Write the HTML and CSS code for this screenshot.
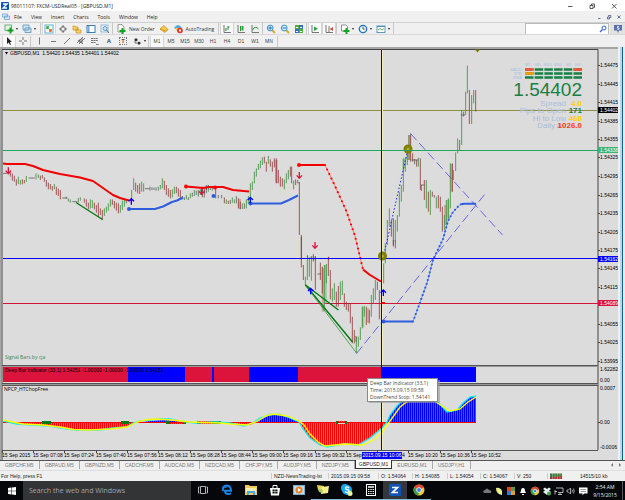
FILE: index.html
```html
<!DOCTYPE html>
<html lang="en">
<head>
<meta charset="utf-8">
<title>98011107: FXCM-USDReal05 - [GBPUSD,M1]</title>
<link rel="stylesheet" href="styles.css">
</head>
<body>
<header class="titlebar">
  <svg class="app-icon" viewBox="0 0 8 8"><rect width="8" height="8" rx="1" fill="#0b55b8"/><path d="M2 2H6L2 6H6" fill="none" stroke="#fff" stroke-width="1.3"/></svg>
  <span class="title">98011107: FXCM-USDReal05 - [GBPUSD,M1]</span>
  <button class="win" aria-label="Minimize"><svg viewBox="0 0 8 8"><path d="M2 4.5H6.500"/></svg></button>
  <button class="win" aria-label="Restore"><svg viewBox="0 0 8 8"><path d="M2 3.500H5V6.500H2ZM3.500 3V2H6.500V5.500H5.500"/></svg></button>
  <button class="win" aria-label="Close"><svg viewBox="0 0 8 8"><path d="M2 2L6.500 6.500M6.500 2L2 6.500"/></svg></button>
</header>

<nav class="menubar">
  <svg class="menu-icon" viewBox="0 0 8 8"><path d="M.5 1H5.500V4H.5ZM2.500 3H7.500V6.500H2.500Z" fill="#d7ebfa" stroke="#5b9bd0" stroke-width=".7"/></svg>
  <button>File</button><button>View</button><button>Insert</button><button>Charts</button><button>Tools</button><button>Window</button><button>Help</button>
  <span class="grow"></span>
  <button class="mdi" aria-label="Minimize chart"><svg viewBox="0 0 6 6"><path d="M2 4.500H4.500"/></svg></button>
  <button class="mdi" aria-label="Restore chart"><svg viewBox="0 0 6 6"><path d="M1.500 3H3.500V5H1.500ZM2.500 2.500V1.500H4.800V3.500H4"/></svg></button>
  <button class="mdi" aria-label="Close chart"><svg viewBox="0 0 6 6"><path d="M1.500 1.500L4.500 4.500M4.500 1.500L1.500 4.500"/></svg></button>
</nav>

<div class="toolbar main-tools">
  <button class="split" aria-label="New chart"><svg viewBox="0 0 10 10"><rect x="1" y="1" width="6.500" height="5.500" fill="#e5f5e5" stroke="#4e9d62" stroke-width=".8"/><path d="M6.500 3.500V9.500M3.500 6.500H9.500" stroke="#15a020" stroke-width="2"/></svg></button>
  <button class="split" aria-label="Profiles"><svg viewBox="0 0 10 10"><path d="M1 1H7V6H1ZM3 4H9V8.500H3Z" fill="#cfe6f6" stroke="#5a91bb" stroke-width=".8"/></svg></button>
  <i class="sep wide"></i>
  <button class="tool pressed" aria-label="Market Watch"><svg viewBox="0 0 10 10"><rect x="1" y="1" width="8" height="8" fill="#fff" stroke="#5eaed2"/><path d="M3 5V3H5" stroke="#21a53a" stroke-width="1.500" fill="none"/><path d="M3 3L7 7" stroke="#21a53a" stroke-width=".8"/><path d="M5 7H7V5" stroke="#e55025" stroke-width="1.500" fill="none"/></svg></button>
  <button class="tool" aria-label="Data Window"><svg viewBox="0 0 10 10"><circle cx="5" cy="5" r="2.500" fill="none" stroke="#666" stroke-width=".8"/><path d="M5 1V4M5 6V9M1 5H4M6 5H9" stroke="#666" stroke-width=".9"/></svg></button>
  <button class="tool" aria-label="Navigator"><svg viewBox="0 0 10 10"><path d="M1 2H3L4 3H6V6H1ZM4 5H6L7 6H9V9H4Z" fill="#f7d35a" stroke="#c39424" stroke-width=".7"/></svg></button>
  <button class="tool" aria-label="Terminal"><svg viewBox="0 0 10 10"><rect x="1" y="1.500" width="8" height="7" fill="#fff" stroke="#397fb5"/><path d="M2.500 2V8" stroke="#67aee0" stroke-width="2"/></svg></button>
  <button class="tool" aria-label="Strategy Tester"><svg viewBox="0 0 10 10"><rect x="1" y="1" width="7" height="7" fill="#eef6fb" stroke="#79aed2" stroke-width=".8"/><circle cx="5" cy="4.500" r="2" fill="#c7e5f7" stroke="#4d88b3" stroke-width=".8"/><path d="M6.500 6L9 9" stroke="#5c6c76"/></svg></button>
  <i class="sep thin"></i>
  <button class="label-tool"><svg viewBox="0 0 10 10"><path d="M2 .5H6L8 3V8H2Z" fill="#fff" stroke="#777" stroke-width=".7"/><path d="M6.500 4V10M3.500 7H9.500" stroke="#13a51e" stroke-width="2"/></svg>New Order</button>
  <button class="tool" aria-label="MetaEditor"><svg viewBox="0 0 10 10"><path d="M1 5L5 1.500L9 5.500L6 8.500Z" fill="#f7c845" stroke="#c08a18" stroke-width=".7"/><path d="M1 5L6 7L9 5.500" stroke="#c08a18" stroke-width=".6" fill="none"/></svg></button>
  <button class="label-tool"><svg viewBox="0 0 10 10"><path d="M1 4Q5 -2 9 4L5 7Z" fill="#54a8dc"/><path d="M2 4H7L5 9Z" fill="#f1cc58"/><circle cx="7" cy="6.500" r="2.800" fill="#e33222"/><rect x="6" y="5.500" width="2" height="2" fill="#fff"/></svg>AutoTrading</button>
  <i class="sep"></i>
  <button class="tool pressed" aria-label="Bar chart"><svg viewBox="0 0 10 10"><path d="M2 1V8.500H9" class="axis"/><path d="M4 4V7M6 2V6M6 3H7.500M3.500 6H4" stroke="#279237" fill="none"/></svg></button>
  <button class="tool" aria-label="Candlesticks"><svg viewBox="0 0 10 10"><path d="M2 1V8.500H9" class="axis"/><path d="M4.500 2V7" stroke="#279237"/><path d="M6.500 2V6.500" stroke="#27aa37" stroke-width="2"/></svg></button>
  <button class="tool" aria-label="Line chart"><svg viewBox="0 0 10 10"><path d="M2 1V8.500H9" class="axis"/><path d="M2.500 6Q5 1 8.500 5" stroke="#279237" fill="none"/></svg></button>
  <i class="sep thin"></i>
  <button class="tool" aria-label="Zoom in"><svg viewBox="0 0 10 10"><path d="M6 6L9 9" stroke="#d5aa28" stroke-width="1.800"/><circle cx="4.200" cy="4" r="2.900" fill="#d4effb" stroke="#398ec4"/><path d="M2.500 4H6M4.200 2.300V5.700" stroke="#2675ad"/></svg></button>
  <button class="tool" aria-label="Zoom out"><svg viewBox="0 0 10 10"><path d="M6 6L9 9" stroke="#d5aa28" stroke-width="1.800"/><circle cx="4.200" cy="4" r="2.900" fill="#d4effb" stroke="#398ec4"/><path d="M2.500 4H6" stroke="#2675ad"/></svg></button>
  <button class="tool" aria-label="Tile windows"><svg viewBox="0 0 10 10"><path d="M1 1H5V5H1ZM5 5H9V9H5Z" fill="#4faf38"/><path d="M5 1H9V5H5ZM1 5H5V9H1Z" fill="#326fc0"/><path d="M2 3.500H4M6 3.500H8M2 7.500H4M6 7.500H8" stroke="#fff" stroke-width="1.200"/></svg></button>
  <i class="sep thin"></i>
  <button class="tool pressed" aria-label="Auto scroll"><svg viewBox="0 0 10 10"><path d="M2 1V8.500H9" class="axis"/><path d="M4 2.500V7L8 4.700Z" fill="#30a33a"/></svg></button>
  <button class="tool pressed" aria-label="Chart shift"><svg viewBox="0 0 10 10"><path d="M2 1V8.500H9M5 2V8" class="axis"/><path d="M9 3V7L5.500 5Z" fill="#cf5132"/></svg></button>
  <i class="sep thin"></i>
  <button class="split" aria-label="Indicators"><svg viewBox="0 0 10 10"><path d="M1.500 1H6L7.500 2.500V7H1.500Z" fill="#fff" stroke="#777" stroke-width=".8"/><path d="M6.500 4V10M3.500 7H9.500" stroke="#15a520" stroke-width="2"/></svg></button>
  <button class="split" aria-label="Periods"><svg viewBox="0 0 10 10"><circle cx="5" cy="5" r="3.700" fill="#e4f5fd" stroke="#2373bc" stroke-width="1.300"/><path d="M5 2.500V5H7" stroke="#444" stroke-width=".8" fill="none"/></svg></button>
  <button class="split" aria-label="Templates"><svg viewBox="0 0 10 10"><rect x="1" y="2" width="8" height="6.500" fill="#fff" stroke="#5d96bd"/><path d="M1 2.500H9" stroke="#4a92ca"/><path d="M2 6L4 4.500L6 6L8 4.500" stroke="#3d9645" fill="none" stroke-width=".8"/></svg></button>
  <i class="sep end"></i>
  <span class="grow"></span>
  <div class="find"><input type="text" aria-label="Find"><svg viewBox="0 0 8 8"><circle cx="5" cy="3" r="2" fill="none" stroke="#3766c9"/><path d="M3.500 4.500L1 7" stroke="#3766c9" stroke-width="1.200"/></svg></div>
  <button class="chat" aria-label="Messages"><svg viewBox="0 0 10 10"><path d="M1 1H9V6.500H6L5 9L4 6.500H1Z" fill="#5873a9"/><path d="M6 2.500H4.500V4H6V5.200H4.300" stroke="#fff" stroke-width=".8" fill="none"/></svg></button>
</div>

<div class="toolbar line-tools">
  <button class="tool pressed" aria-label="Cursor"><svg viewBox="0 0 10 10"><path d="M3 1V8L4.700 6.500L6 9L7 8.500L5.800 6H8Z" fill="#222"/></svg></button>
  <button class="tool" aria-label="Crosshair"><svg viewBox="0 0 10 10"><path d="M5 1V4M5 6V9M1 5H4M6 5H9" class="ink"/></svg></button>
  <i class="sep thin"></i>
  <button class="tool" aria-label="Vertical line"><svg viewBox="0 0 10 10"><path d="M5.500 1.500V8.500" class="ink"/></svg></button>
  <button class="tool" aria-label="Horizontal line"><svg viewBox="0 0 10 10"><path d="M3 5.500H8" class="ink"/></svg></button>
  <button class="tool" aria-label="Trendline"><svg viewBox="0 0 10 10"><path d="M2 8L8 2" class="ink"/></svg></button>
  <button class="tool" aria-label="Channel"><svg viewBox="0 0 10 10"><path d="M1 7L7 1M3 8L9 2M2 4L7 8M4 3V7M6 2V7" class="ink"/></svg></button>
  <button class="tool" aria-label="Fibonacci"><svg viewBox="0 0 10 10"><path d="M1 2.500H8M1 4.500H8M1 6.500H6M6 8.500H9" class="ink" stroke-dasharray="2 .4"/></svg></button>
  <button class="tool glyph" aria-label="Text">A</button>
  <button class="tool glyph" aria-label="Text label"><span class="boxed">T</span></button>
  <button class="split" aria-label="Arrows"><svg viewBox="0 0 10 10"><path d="M2 4L4 2L6 4L4 5.500ZM5 7L7 5.500L9 7L7 9Z" fill="#333"/><path d="M3 5V7H5" class="ink" fill="none"/></svg></button>
  <i class="sep thin"></i>
  <button class="tool pressed">M1</button><button class="tool">M5</button><button class="tool">M15</button><button class="tool">M30</button><button class="tool">H1</button><button class="tool">H4</button><button class="tool">D1</button><button class="tool">W1</button><button class="tool">MN</button>
  <i class="sep end"></i>
</div>

<main class="workspace">
<svg class="chart" viewBox="0 47 625 413" role="img" aria-label="GBPUSD M1 chart">
  <defs>
    <pattern id="redbars" width="2" height="10" patternUnits="userSpaceOnUse"><rect width="2" height="10" fill="#f88"/><rect width="1.300" height="10" fill="#f00"/></pattern>
    <pattern id="bluebars" width="2" height="10" patternUnits="userSpaceOnUse"><rect width="2" height="10" fill="#77e"/><rect width="1.400" height="10" fill="#00f"/></pattern>
    <g id="down"><path d="M0 -10V8M-8 0L0 9L8 0" fill="none" stroke="#dc143c" stroke-width="4"/></g>
    <g id="up"><path d="M0 10V-8M-8 0L0 -8L8 0" fill="none" stroke="#00f" stroke-width="4"/></g>
    <g id="marker"><circle r="4.500" fill="#808000"/><circle r="1.500" fill="#b8ac30"/></g>
  </defs>
  <rect y="47" width="625" height="413" fill="#dcdcdc"/>
  <rect y="47" width="619" height="2" fill="#a5a5a5"/>
  <rect y="47" width="1" height="413" fill="#a5a5a5"/>
  <path d="M2 460V49.500H598V450" fill="none" stroke="#444"/>
  <rect x="618" y="47" width="2" height="413" fill="#f0f0f0"/>
  <rect x="620" y="47" width="2" height="413" fill="#b9d8ee"/>
  <rect x="622" y="47" width="1" height="413" fill="#17607b"/>
  <rect x="623" y="47" width="2" height="413" fill="#e4ebee"/>
  <path d="M475 49.500H480L477.500 52.500Z" fill="#808000"/>

  <path d="M3 110.500H598" stroke="#8f8f3e"/>
  <path d="M3 150.500H598" stroke="#20a860"/>
  <path d="M3 303.500H598" stroke="#d0143a"/>
  <path d="M382.500 50V450" stroke="#eeeec0"/>

  <g class="bars">
    <g transform="translate(0 140) scale(.33333)">
      <path class="bull" d="M55 110V132M61 120V134M79 108V126M108 100V118M115 103V114M163 132V148M205 175V185M211 178V188M235 174V188M241 172V182M271 178V206M277 180V204M313 205V228M319 200V218M325 190V212M331 178V200M361 195V218M367 182V210M373 180V200M395 150V182M401 115V150M425 125V155M431 130V155M475 140V152M481 135V148M487 115V145M517 148V172M523 140V162M559 165V178M571 160V175M583 150V168M601 148V165"/>
      <path class="bear" d="M31 96V110M37 100V122M43 107V125M49 118V137M67 118V133M73 120V130M121 107V120M127 105V115M133 112V125M139 120V140M145 128V148M151 132V148M157 138V152M169 140V165M175 146V168M181 150V178M253 175V188M259 178V200M265 188V208M283 188V208M289 195V218M295 188V230M301 205V225M307 210V240M337 178V195M343 183V205M349 188V212M355 190V220M407 128V155M413 135V160M419 130V162M493 122V150M499 135V165M505 145V170M511 150V175M529 140V160M535 145V170M541 150V175M607 140V172M613 145V160"/>
      <path class="doji" d="M9 100H21M86 114H104M187 174H202M199 170V176M217 185H232M379 178V190M435 146H448M450 140V152M456 142V150M462 143V150M468 142V152M547 168V178M553 172V180M565 172V180M577 158V170M589 152V165M595 150V170M619 135V150M625 135V145"/>
    </g>
    <g transform="translate(200 140) scale(.33333)">
      <path class="soft-bear" d="M119 176V207M229 60V128"/>
      <path class="bull" d="M25 135V155M79 178V192M97 172V188M103 178V190M127 190V207M139 178V205M145 168V192M151 130V180M157 125V150M163 95V130M169 85V110M175 72V90M181 62V85M187 52V75M205 48V72M253 118V148M259 100V130M265 90V118M281 122V148M323 345V358M334 348V358"/>
      <path class="bear" d="M47 145V175M73 172V190M85 182V192M115 175V205M121 185V208M193 50V70M199 65V95M211 58V80M217 65V95M223 55V82M229 55V130M235 90V130M241 110V140M247 115V140M271 80V110M275 80V130M287 118V135M298 128V285M304 285V360M295 128H300M386 350V360"/>
      <path class="doji" d="M7 145V165M13 150V172M19 140V160M31 138V150M37 138V152M55 165V175M65 165V175M91 180V192M109 168V190M133 190V207M293 120V130M340 348V360M346 348V360"/>
    </g>
    <g transform="translate(290 240) scale(.33333)">
      <path class="soft-bear" d="M99 85V215M234 205V248"/>
      <path class="soft-bull" d="M107 75V190M219 200V262"/>
      <path class="bull" d="M46 110V138M52 48V120M58 52V110M64 50V122M103 75V212M109 72V130M127 145V185M133 130V180M151 125V180M157 122V165M199 290V340M205 290V320M211 262V300M217 200V265M223 198V230M244 165V230M250 145V192M256 120V180M281 70V130M286 10V70"/>
      <path class="bear" d="M34 -10V82M40 75V120M76 50V150M91 68V120M97 80V160M115 52V108M121 90V178M139 155V200M145 138V200M163 160V200M169 185V210M175 190V215M181 190V250M187 230V310M193 270V310M229 200V255M238 210V250M262 125V150M268 150V238M310 0V20M316 0V25"/>
      <path class="doji" d="M70 42V65M82 102H93M198 288V305"/>
    </g>
    <g transform="translate(370 45) scale(.33333)">
      <path class="soft-bull" d="M102 342V370M113 300V345M234 465V520"/>
      <path class="soft-bear" d="M118 270V345M245 357V440M226 480V540"/>
      <path class="bull" d="M52 525V600M58 490V545M76 525V590M82 510V560M88 440V515M94 420V470M100 340V440M106 338V380M112 300V360M117 270V345M145 338V365M169 405V490M181 435V510M199 455V490M223 510V555M229 465V545M235 460V525M241 355V490M250 375V405M257 322V378M263 280V325M275 195V300M287 140V210M292 62V145M305 150V237M311 135V175"/>
      <path class="bear" d="M64 525V575M70 520V600M122 266V350M128 325V350M151 340V435M163 405V465M175 440V500M187 440V455M205 450V490M211 455V500M217 485V560M247 355V440M298 135V237M317 135V200M140 345V365"/>
      <path class="doji" d="M134 342V358M154 420V438M193 450V458M269 285V315M281 200V215M125 345H145M153 420H163M272 210H285"/>
    </g>
  </g>

  <g fill="none" stroke-linejoin="round">
    <g stroke="#f00000" stroke-width="2">
      <path d="M3 163.500L7 164H25L33 166L43 170L60 174L80 177.500L93 181L103 188L113 195L120 198L129 200.500"/>
      <path d="M186 186.500L203 188L209 187H223L233 190L249 191.500"/>
      <path d="M299 165H325"/>
      <path d="M363 269.500L370 275L381 281.500"/>
    </g>
    <path d="M325 165L335 186L346.500 211.500L355 236L360 257L363 269.500" stroke="#f77"/>
    <path d="M325 165L335 186L346.500 211.500L355 236L360 257L363 269.500" stroke="#f00" stroke-width="2.200" stroke-linecap="round" stroke-dasharray="0 5"/>
    <g stroke="#2f5de0" stroke-width="2">
      <path d="M129 209H155L163 206.500L172 202L177 200.500L183 197.500"/>
      <path d="M250 203.500H281L289 200L298 195.500"/>
      <path d="M383 321.500H413"/>
      <path d="M460 204.500L464 203.700H476"/>
    </g>
    <path d="M413 321.500L418 308L427 283L433 260L443 239L448 221L453 212L460 204.500" stroke="#7d9ce8"/>
    <path d="M413 321.500L418 308L427 283L433 260L443 239L448 221L453 212L460 204.500" stroke="#2f5de0" stroke-width="2.200" stroke-linecap="round" stroke-dasharray="0 4"/>
    <path d="M356.500 353.500L485 194" stroke="#4747e0" stroke-width=".8" stroke-dasharray="9 4"/>
    <path d="M410.500 133.500L502.500 235" stroke="#4747e0" stroke-width=".8" stroke-dasharray="9 4"/>
    <path d="M384 254L408 149" stroke="#2020d8" stroke-dasharray="1.500 2"/>
    <path d="M76 202.500L102.500 219.500M305.500 285L338.500 310M305.500 285L352.500 342" stroke="#007a10" stroke-width="1.400"/>
    <path d="M306 286L356.500 353" stroke="#35913e" stroke-width=".8"/>
  </g>
  <g fill="#f00"><circle cx="186" cy="186.500" r="2"/><circle cx="215" cy="187.500" r="2"/><circle cx="299" cy="165" r="2"/><path d="M382 302H385V304H382Z"/></g>
  <g fill="#2f5de0"><circle cx="129" cy="209" r="2"/><circle cx="213.500" cy="196" r="2"/><circle cx="250.500" cy="203.500" r="2"/><circle cx="383.500" cy="321.500" r="2"/></g>
  <g transform="scale(.33333)">
    <use href="#down" x="25" y="512"/><use href="#down" x="605" y="574"/><use href="#down" x="898" y="526"/><use href="#down" x="945" y="736"/>
    <use href="#up" x="394" y="604"/><use href="#up" x="751" y="600"/><use href="#up" x="932" y="873"/><use href="#up" x="1150" y="878"/>
  </g>
  <path d="M3 258.500H598" stroke="#00f"/>
  <use href="#marker" x="408" y="149"/><use href="#marker" x="382.500" y="256"/>
  <path d="M3 150.500H598" stroke="#20a860"/>

  <g class="board">
    <g class="heads"><text x="525" y="66">M1</text><text x="535" y="66">M5</text><text x="544" y="66">M15</text><text x="554" y="66">M30</text><text x="566" y="66">H1</text><text x="575" y="66">H4</text>
    <text x="522" y="71" text-anchor="end">MACD</text><text x="522" y="75" text-anchor="end">STR</text><text x="522" y="79" text-anchor="end">EMA</text></g>
    <path d="M525 69.500H582M525 73.500H582M525 77.500H582" stroke="#178044" stroke-width="2.600" stroke-dasharray="8.500 1.200"/>
    <path d="M525 69.500H533.500M573.500 69.500H582" stroke="#ff5035" stroke-width="2.600"/><path d="M525 73.500H533.500" stroke="#ff9d00" stroke-width="2.600"/>
    <text class="quote" x="582" y="96">1.54402</text>
    <g class="keys"><text x="566" y="106">Spread</text><text x="566" y="113">Pips to Open</text><text x="566" y="121">Hi to Low</text><text x="566" y="128">Daily Av</text></g>
    <g class="vals"><text x="582" y="106" fill="#ffd000">4.0</text><text x="582" y="113" fill="#178044">171</text><text x="582" y="121" fill="#ffd000">468</text><text x="582" y="128" fill="#ff3c14">1026.0</text></g>
  </g>
  <path d="M5 52H8L6.500 54.500Z" fill="#000"/>
  <text x="10" y="55">GBPUSD,M1&#160; 1.54420 1.54435 1.54401 1.54402</text>
  <text class="ui" x="5" y="359" fill="#2e8b57">Signal Bars by cja</text>

  <path d="M2 365.500H598M2 383.500H598M2 385.500H598M2 450.500H598" stroke="#555"/>
  <path d="M2 366.500H598M2 384.500H598" stroke="#999"/>
  <g><rect x="3" y="367" width="473" height="15" fill="#dc143c"/><path d="M128 367H185V382H128ZM212 367H214V382H212ZM249 367H298V382H249ZM382 367H476V382H382Z" fill="#00f"/></g>
  <text x="5" y="372">Deep Bar Indicator (33,1) 1.54251 -1.00000 -1.00000 -1.00000 1.54251</text>
  <text class="ui" x="4" y="391">NPCP_HTChopFree</text>

  <path d="M5 422L17 424L33 425L50 426L67 429L77 430H100L113 428L127 427L133 424L137 422ZM220 422L250 425L257 422ZM167 421H184V424H167ZM198 421H213V424H198ZM299 422L303 428L310 438L320 445L327 446.500L337 445L345 444L358 445L370 438L382 428L387 422ZM338 421H346V424H338Z" fill="url(#redbars)"/>
  <path d="M143 422L150 421L167 420L180 422ZM254 422L260 420L270 415H280L290 418L299 422ZM387 422L390 415L397 406L403 400L410 396L425 395L437 401L447 412L457 410L463 403L470 397L476 396V422Z" fill="url(#bluebars)"/>
  <path d="M3 422.500H476" stroke="#f00"/>
  <path d="M42 422.500H51M121 422.500H129M166 422.500H170M183 422.500H186M197 422.500H200M212 422.500H221M336 422.500H338M345 422.500H347" stroke="#087a12" stroke-width="3"/>
  <path d="M3 421L13 423L17 424L33 425L50 426L67 429L77 430H100L113 428L127 427L133 423L140 421L150 420L160 419H170L180 421L195 423L215 422L230 423L244 426L254 422L260 418L270 414.500H280L290 418L299 422L303 429L310 438L320 445L327 447L337 445L345 444L358 445L370 438L382 428L387 422L390 415L397 406L403 400L410 396L425 395L437 401L447 412L457 410L463 403L470 397L476 396" class="signal cyan"/>
  <path d="M3 420L13 422L23 424L43 425L60 427L73 429.500L90 430L110 429L127 427L137 422L145 420L157 419L172 420L190 422L220 423L230 424L247 425L258 421L265 416L274 414L287 416L299 421L304 425L310 434L318 442L325 446L345 444L363 445L375 439L382 432L390 421L400 407L412 398L428 397L439 404L450 411L460 409L468 402L476 397" class="signal yellow"/>

  <g stroke="#444"><path d="M598 65.500H600M598 84.500H600M598 102.500H600M598 121.500H600M598 139.500H600M598 157.500H600M598 176.500H600M598 195.500H600M598 213.500H600M598 232.500H600M598 250.500H600M598 268.500H600M598 287.500H600M598 324.500H600M598 342.500H600M598 361.500H600M598 422.500H600"/>
  <path d="M2.500 450V453M33.500 450V453M64.500 450V453M96.500 450V453M127.500 450V453M158.500 450V453M190.500 450V453M221.500 450V453M252.500 450V453M283.500 450V453M315.500 450V453M346.500 450V453M377.500 450V453M408.500 450V453M440.500 450V453M471.500 450V453"/></g>
  <g><text x="600" y="67">1.54475</text><text x="600" y="86">1.54445</text><text x="600" y="104">1.54415</text><text x="600" y="123">1.54385</text><text x="600" y="141">1.54355</text><text x="600" y="159">1.54325</text><text x="600" y="178">1.54295</text><text x="600" y="197">1.54265</text><text x="600" y="215">1.54235</text><text x="600" y="234">1.54205</text><text x="600" y="252">1.54175</text><text x="600" y="270">1.54145</text><text x="600" y="289">1.54115</text><text x="600" y="326">1.54055</text><text x="600" y="344">1.54025</text><text x="600" y="363">1.53995</text><text x="600" y="371">1.62282</text><text x="600" y="382">0.00</text><text x="600" y="390">0.0007</text><text x="600" y="424">0.00</text><text x="600" y="449">-0.0006</text></g>
  <path d="M598 107H618V113H598Z"/><path d="M598 147H618V153H598Z" fill="#3cb371"/><path d="M598 256H618V262H598Z" fill="#00f"/><path d="M598 300H618V306H598Z" fill="#dc143c"/>
  <g fill="#fff"><text x="600" y="112">1.54402</text><text x="600" y="152">1.54338</text><text x="600" y="261">1.54162</text><text x="600" y="305">1.54089</text></g>
  <g><text x="2" y="457">15 Sep 2015</text><text x="33" y="457">15 Sep 07:08</text><text x="64" y="457">15 Sep 07:24</text><text x="96" y="457">15 Sep 07:40</text><text x="127" y="457">15 Sep 07:56</text><text x="158" y="457">15 Sep 08:12</text><text x="190" y="457">15 Sep 08:28</text><text x="221" y="457">15 Sep 08:44</text><text x="252" y="457">15 Sep 09:00</text><text x="283" y="457">15 Sep 09:16</text><text x="315" y="457">15 Sep 09:32</text><text x="346" y="457">15 Sep</text><text x="402" y="457">4</text><text x="408" y="457">15 Sep 10:20</text><text x="440" y="457">15 Sep 10:36</text><text x="471" y="457">15 Sep 10:52</text></g>
  <path d="M362 452H402V459H362Z" fill="#00f"/><text x="382" y="457" fill="#fff" text-anchor="middle">2015.09.15 10:06</text>
  <path d="M381.500 50V450" stroke="#0000c8"/>
  <rect x="369" y="380" width="71" height="23" fill="#999" opacity=".6"/>
  <rect x="367.500" y="378.500" width="70" height="23" fill="#fff" stroke="#888"/>
  <g class="tip"><text x="370" y="385">Deep Bar Indicator (33,1)</text><text x="370" y="392">Time: 2015.09.15 09:58</text><text x="370" y="399">DownTrend Stop: 1.54141</text></g>
</svg>
</main>

<nav class="tabs">
  <button>GBPCHF,M5</button><button>GBPAUD,M5</button><button>GBPNZD,M5</button><button>CADCHF,M5</button><button>AUDCAD,M5</button><button>NZDCAD,M5</button><button>CHFJPY,M5</button><button>AUDJPY,M5</button><button>NZDJPY,M5</button><button class="current">GBPUSD,M1</button><button>EURUSD,M1</button><button>USDJPY,H1</button>
  <span class="grow"></span>
  <svg class="scroll" viewBox="0 0 14 6"><path d="M4 1L2 3L4 5ZM10 1L12 3L10 5Z" fill="#777"/></svg>
</nav>

<div class="status">
  <span class="help">For Help, press F1</span><span>NZD-NewsTrading-lst</span><span>2015.09.15 09:58</span><span>O: 1.54064</span><span>H: 1.54085</span><span>L: 1.54054</span><span>C: 1.54067</span><span>V: 250</span>
  <span class="net"><svg viewBox="0 0 12 6"><path d="M0 .5H12V6H0Z" fill="#3b7a35"/><path d="M0 4H7V6H0ZM8 3H12V6H8Z" fill="#a8322a"/><path d="M2.500 0V6M5 0V6M7.500 0V6M10 0V6" stroke="#ddd" stroke-width=".4"/></svg>14515/10 kb</span>
</div>

<footer class="taskbar">
  <button class="start" aria-label="Start"><svg viewBox="0 0 10 10"><path d="M1 2L4.500 1.500V4.700H1ZM5 1.400L9 1V4.700H5ZM1 5.200H4.500V8.500L1 8ZM5 5.200H9V9L5 8.600Z" fill="#fff"/></svg></button>
  <input class="search" type="search" aria-label="Search" placeholder="Search the web and Windows">
  <div class="apps">
    <button aria-label="Task View"><svg viewBox="0 0 12 12"><path d="M3.500 2.500H8.500V9.500H3.500ZM2.500 3H1.500V9H2.500M9.500 3H10.500V9H9.500" fill="none" stroke="#ddd" stroke-width=".8"/></svg></button>
    <button aria-label="Edge"><svg viewBox="0 0 12 12"><path d="M2 7Q1 1.500 6 1.500Q10 2 10 6.800H4Q4 10 7 10Q8.500 10 10 9" fill="none" stroke="#1985e8" stroke-width="2"/><path d="M1 6Q3 3 6 3" stroke="#1985e8" fill="none"/></svg></button>
    <button aria-label="File Explorer"><svg viewBox="0 0 12 12"><path d="M0 1H4L5 2H12V11H0Z" fill="#f4ca58"/><path d="M1 4H11V8H1Z" fill="#fdeeb3"/><path d="M2 7H10V11H8V9H4V11H2Z" fill="#4ba7df"/></svg></button>
    <button aria-label="Store"><svg viewBox="0 0 12 12"><path d="M4 4V1.500H8V4" fill="none" stroke="#fff"/><path d="M1 4H11L10 11.500H2Z" fill="#fff"/><path d="M3.500 5.500H5.700V7.200H3.500ZM6.200 5.500H8.500V7.200H6.200ZM3.500 7.700H5.700V9.500H3.500ZM6.200 7.700H8.500V9.500H6.200Z" fill="#111"/></svg></button>
    <button aria-label="Media player"><svg viewBox="0 0 12 12"><rect y="1" width="12" height="10" fill="#78aed0"/><rect x="1" y="2" width="10" height="8" fill="#bfdced"/><circle cx="6" cy="6" r="3.500" fill="#ef8121"/><path d="M5 4L8 6L5 8Z" fill="#fff"/></svg></button>
    <button class="open" aria-label="Sticky Notes"><svg viewBox="0 0 12 12"><path d="M0 1L7 2L6 8L1 6Z" fill="#e4d65a"/><path d="M5 3L12 2L11 9L4 10Z" fill="#f7ee85"/><path d="M1 5L6 6L5 9L2 8Z" fill="#9fca70"/></svg></button>
    <button class="open" aria-label="Skype"><svg viewBox="0 0 12 12"><circle cx="4" cy="4" r="4" fill="#1ba8ea"/><circle cx="6" cy="6" r="5" fill="#1ba8ea"/><path d="M8 4Q6 2 4.500 3.500Q4 5 6 5.500Q9 6 7.500 8Q5.500 9 4 7.500" fill="none" stroke="#fff" stroke-width="1.300"/><circle cx="9" cy="9.500" r="2.500" fill="#eaf6a0"/></svg></button>
    <button class="open" aria-label="Calculator"><svg viewBox="0 0 12 12"><rect x="1.500" y=".5" width="9" height="11" fill="none" stroke="#fff"/><path d="M3 3H9" stroke="#fff" stroke-width="1.500"/><path d="M3 5.500H9M3 7.500H9M3 9.500H9" stroke="#fff" stroke-width="1.200" stroke-dasharray="1.400 .9"/></svg></button>
    <button class="open active" aria-label="Trading terminal"><svg viewBox="0 0 12 12"><rect width="12" height="12" rx="1" fill="#0f55b8"/><path d="M3 3.500H8.500L3.500 8.500H9" fill="none" stroke="#fff" stroke-width="1.700"/></svg></button>
    <button class="open" aria-label="Chrome"><svg viewBox="0 0 12 12"><circle cx="6" cy="6" r="5.500" fill="#f5c830"/><path d="M6 6L1.200 3.300A5.500 5.500 0 0 1 11 3.500Z" fill="#e24232"/><path d="M6 6L1.200 3.300A5.500 5.500 0 0 0 5.500 11.500Z" fill="#35a04c"/><circle cx="6" cy="6" r="2.400" fill="#3c7ee0" stroke="#fff" stroke-width=".8"/></svg></button>
  </div>
  <span class="grow"></span>
  <div class="tray">
    <svg viewBox="0 0 10 10"><path d="M2 7Q0 5 3 4Q5 1 7 4Q10 4 9 7Z" fill="#777"/></svg>
    <svg viewBox="0 0 10 10"><path d="M2 2Q6 1 8 5V9Q2 8 2 2Z" fill="#e9f28c"/></svg>
    <svg viewBox="0 0 10 10"><path d="M1 1H5V5H1Z" fill="#d44b2e"/><path d="M5 1H9V5H5Z" fill="#5a9b4b"/><path d="M1 5H5V9H1Z" fill="#3978c0"/><path d="M5 5H9V9H5Z" fill="#e39b32"/></svg>
    <svg viewBox="0 0 10 10"><path d="M2 7L3 5Q3 2 5 2Q7 2 7 5L8 7ZM4 8H6V9H4Z" fill="#fff"/></svg>
    <svg viewBox="0 0 10 10"><circle cx="5" cy="5" r="4.300" fill="#f3c32e"/><path d="M5 5L1.300 3A4.300 4.300 0 0 1 9 3.500Z" fill="#e24232"/><path d="M5 5L1.300 3A4.300 4.300 0 0 0 4.500 9.300Z" fill="#35a04c"/><circle cx="5" cy="5" r="1.800" fill="#3c7ee0" stroke="#fff" stroke-width=".7"/></svg>
    <svg viewBox="0 0 10 10"><path d="M1 3L3 1.500L5 3L7 1.500L9 3L7 4.500L9 6L5 9L1 6L3 4.500Z" fill="#e9eef2"/><circle cx="7" cy="7.500" r="2" fill="#49a84e"/></svg>
    <svg viewBox="0 0 10 10"><path d="M2 2H9V6.500H4M6 7V8.500M4 8.500H8M1 4V8.500M1 5.500H3" fill="none" stroke="#ddd" stroke-width=".8"/></svg>
    <svg viewBox="0 0 10 10"><path d="M1 4H2.500L4.500 2V8L2.500 6H1ZM6 3.500Q7 5 6 6.500M7.500 2.500Q9 5 7.500 7.500" fill="none" stroke="#ddd" stroke-width=".7"/></svg>
    <svg viewBox="0 0 10 10"><path d="M1 1.500H9.500V7.500H6L4.500 9.500V7.500H1Z" fill="#fff"/><path d="M2.500 3.500H8M2.500 5.500H8" stroke="#555" stroke-width=".6"/></svg>
  </div>
  <div class="clock"><span>2:54 AM</span><span>9/15/2015</span></div>
  <i class="peek"></i>
</footer>
</body>
</html>
```

FILE: styles.css
```css
* { box-sizing: border-box; }
body {
  margin: 0;
  min-height: 100vh;
  display: flex;
  flex-direction: column;
  background: #f0f0f0;
  color: #222;
  font-family: "Liberation Sans", Arial, sans-serif;
  font-size: 5px;
  line-height: 6px;
}
button {
  display: flex;
  align-items: center;
  justify-content: center;
  margin: 0;
  padding: 0;
  border: 0;
  background: none;
  color: inherit;
  font: inherit;
  white-space: nowrap;
}
input { min-width: 0; border: 0; outline: 0; font: inherit; }
svg { display: block; flex: none; }
.grow { flex: 1; }

.titlebar { display: flex; align-items: center; height: 11px; background: #fff; font-family: "Open Sans", sans-serif; }
.title { flex: 1; padding-left: 2px; }
.app-icon { width: 8px; height: 8px; margin-left: 1px; }
.win { width: 22px; }
.win svg { width: 8px; height: 8px; fill: none; stroke: #333; stroke-width: .8; }

.menubar { display: flex; align-items: center; height: 11px; padding: 0 2px; gap: 9px; font-family: "Open Sans", sans-serif; }
.menu-icon { width: 8px; height: 8px; margin-right: -5px; }
.mdi { width: 9px; margin-left: -8px; }
.mdi svg { width: 6px; height: 6px; fill: none; stroke: #41597c; stroke-width: .8; }
.mdi:nth-last-child(-n+2) { margin-left: -8px; }
.mdi + .mdi { margin-left: -8px; }

.toolbar { display: flex; align-items: center; height: 12px; padding-left: 2px; border-top: 1px solid #d0d0d0; color: #333; }
.line-tools { height: 13px; border-color: #d8d8d8; }
.toolbar svg { width: 10px; height: 10px; }
.tool { width: 14px; height: 11px; color: #444; }
.pressed { background: #fafafa; border: 1px solid #d5d5d5; border-width: 0 1px; }
.split { width: 18px; height: 11px; padding-right: 1px; gap: 2px; }
.split::after { content: ""; border: 1px solid transparent; border-top: 2px solid #222; border-bottom: 0; }
.label-tool { gap: 3px; height: 11px; padding: 0 2px; font-family: "Open Sans", sans-serif; }
.glyph { font-size: 6px; font-weight: bold; }
.boxed { padding: 0 1px; border: 1px dotted #777; font-size: 5px; }
.sep { width: 3px; height: 11px; border-right: 1px solid #c8c8c8; margin-right: 1px; }
.sep.thin { width: 1px; }
.sep.end { width: 1px; margin-left: 1px; }
.axis { fill: none; stroke: #666; stroke-width: .9; }
.ink { fill: none; stroke: #555; stroke-width: .8; }
.find { display: flex; align-items: center; width: 84px; height: 12px; border: 1px solid #bbb; background: #fff; }
.find input { flex: 1; width: 10px; background: none; }
.find svg { width: 8px; height: 8px; margin-right: 1px; }
.chat { width: 15px; height: 12px; margin-left: 1px; background: #e2e2e2; }

.workspace { flex: 1; display: flex; }
.chart { width: 100%; height: auto; font-size: 5px; }
.chart .ui { font-family: "Open Sans", sans-serif; }
.bars { fill: none; }
.bull { stroke: #2c8c2c; stroke-width: 2.300; }
.bear { stroke: #8e2f2f; stroke-width: 2.300; }
.doji { stroke: #555; stroke-width: 2.300; }
.soft-bull { stroke: #a5c8a5; stroke-width: 8; }
.soft-bear { stroke: #cfa5a5; stroke-width: 8; }
.heads { fill: #a9bddc; font-size: 4px; }
.quote { fill: #178044; font-size: 19px; text-anchor: end; }
.keys { fill: #a9bddc; font-size: 8px; text-anchor: end; }
.vals { font-size: 8px; font-weight: bold; text-anchor: end; }
.signal { fill: none; stroke-width: 1.300; }
.cyan { stroke: #1ee; }
.yellow { stroke: #ff0; }
.tip { fill: #444; font-family: "Open Sans", sans-serif; }

.tabs { display: flex; height: 10px; border-top: 1px solid #555; color: #777; }
.tabs button { height: 8px; padding: 0 5px; border-right: 1px solid #aaa; }
.tabs .current { height: 9px; padding: 0 3px; margin-top: -1px; border: 1px solid #333; border-top: 0; background: #fff; color: #222; }
.scroll { width: 14px; height: 6px; margin: 1px 2px 0 0; }

.status { display: grid; grid-template-columns: 271fr 57fr 50fr 34fr 35fr 33fr 34fr 33fr 78fr; align-items: center; height: 11px; border-top: 1px solid #ddd; }
.status span { padding-left: 2px; border-left: 1px solid #ccc; white-space: nowrap; overflow: hidden; }
.status .help { padding-left: 1px; border: 0; }
.status .net { display: flex; align-items: center; gap: 18px; }
.net svg { width: 12px; height: 6px; }

.taskbar { display: flex; height: 19px; background: #05070a; color: #eee; font-family: "Open Sans", sans-serif; }
.start { width: 23px; }
.start svg { width: 10px; height: 10px; }
.search { width: 168px; padding: 0 6px; background: #333436; color: #aaa; font-size: 7px; }
.search::placeholder { color: #a5a5a5; opacity: 1; }
.apps { display: flex; }
.apps button { width: 24px; border-bottom: 1px solid transparent; }
.apps svg { width: 12px; height: 12px; }
.apps .open { border-bottom-color: #83b9dc; }
.apps .active { background: #34383d; }
.tray { display: flex; align-items: center; gap: 2px; }
.tray svg { width: 10px; height: 10px; }
.clock { display: flex; flex-direction: column; align-items: center; justify-content: center; width: 34px; line-height: 8px; }
.peek { width: 3px; border-left: 1px solid #555; }
```
